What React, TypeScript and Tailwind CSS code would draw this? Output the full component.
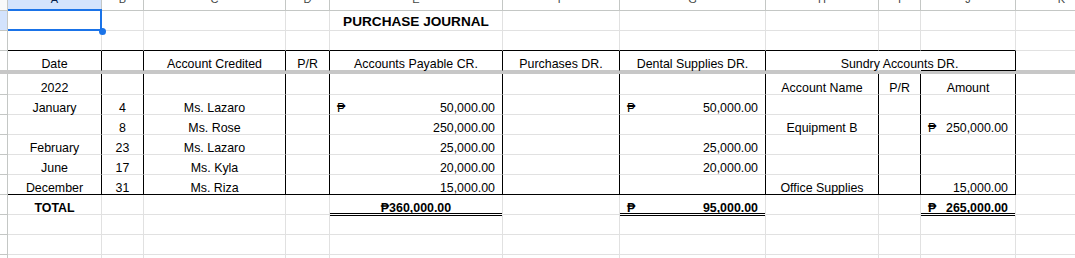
import type { ReactNode } from 'react';

type Cell = {
	t?: ReactNode;
	a?: 'c' | 'r' | 'cur';
	r?: 'k' | 'n';
	b?: 'k' | 'bar' | 'w';
	sh?: 'top' | 'bot';
	bold?: boolean;
	big?: boolean;
};

const COLS = [
	'w-[94px]',
	'w-[42px]',
	'w-[142px]',
	'w-[44px]',
	'w-[173px]',
	'w-[117px]',
	'w-[146px]',
	'w-[113px]',
	'w-[42px]',
	'w-[95px]',
	'w-[92px]',
];
const LETTERS = ['A', 'B', 'C', 'D', 'E', 'F', 'G', 'H', 'I', 'J', 'K'];

const RIGHT = { g: 'border-r-[#e1e1e1]', k: 'border-r-black', n: 'border-r-transparent' };
const BOTTOM = {
	g: 'border-b-[#e1e1e1]',
	k: 'border-b-black',
	bar: 'border-b-[#c7c7c7]',
	w: 'border-b-white',
};
const SHADOW = { top: 'shadow-[inset_0_1px_0_#000]', bot: 'shadow-[inset_0_-1px_0_#000]' };

// fill a full row of 11 cells from the few that hold something
function row(cells: Record<number, Cell>, base: Cell = {}, upto = 10): Cell[] {
	return COLS.map((_, i) => ({ ...(i < upto ? base : {}), ...cells[i] }));
}

const boxed: Cell = { r: 'k' };

const rows: { h: string; gutter?: string; cells: Cell[] }[] = [
	{
		h: 'h-[20px]',
		gutter: 'bg-[#d3e3fd]',
		cells: row({ 4: { t: 'PURCHASE JOURNAL', a: 'c', bold: true, big: true } }),
	},
	{ h: 'h-[20px]', cells: row({}, { b: 'k' }) },
	{
		h: 'h-[20px]',
		gutter: 'border-b-[#c7c7c7]',
		cells: row(
			{
				0: { t: 'Date', a: 'c' },
				2: { t: 'Account Credited', a: 'c' },
				3: { t: 'P/R', a: 'c' },
				4: { t: 'Accounts Payable CR.', a: 'c' },
				5: { t: 'Purchases DR.', a: 'c' },
				6: { t: 'Dental Supplies DR.', a: 'c' },
				7: { r: 'n' },
				8: { t: 'Sundry Accounts DR.', a: 'c', r: 'n' },
				9: { b: 'k' },
				10: { b: 'bar' },
			},
			{ r: 'k', b: 'bar' },
		),
	},
];

const body: { h: string; cells: Cell[] }[] = [
	{
		h: 'h-[21px]',
		cells: row(
			{
				0: { t: '2022', a: 'c' },
				7: { t: 'Account Name', a: 'c' },
				8: { t: 'P/R', a: 'c' },
				9: { t: 'Amount', a: 'c' },
			},
			boxed,
		),
	},
	{
		h: 'h-[20px]',
		cells: row(
			{
				0: { t: 'January', a: 'c' },
				1: { t: '4', a: 'c' },
				2: { t: 'Ms. Lazaro', a: 'c' },
				4: { t: '50,000.00', a: 'cur' },
				6: { t: '50,000.00', a: 'cur' },
			},
			boxed,
		),
	},
	{
		h: 'h-[20px]',
		cells: row(
			{
				1: { t: '8', a: 'c' },
				2: { t: 'Ms. Rose', a: 'c' },
				4: { t: '250,000.00', a: 'r' },
				7: { t: 'Equipment B', a: 'c' },
				9: { t: '250,000.00', a: 'cur' },
			},
			boxed,
		),
	},
	{
		h: 'h-[20px]',
		cells: row(
			{
				0: { t: 'February', a: 'c' },
				1: { t: '23', a: 'c' },
				2: { t: 'Ms. Lazaro', a: 'c' },
				4: { t: '25,000.00', a: 'r' },
				6: { t: '25,000.00', a: 'r' },
			},
			boxed,
		),
	},
	{
		h: 'h-[20px]',
		cells: row(
			{
				0: { t: 'June', a: 'c' },
				1: { t: '17', a: 'c' },
				2: { t: 'Ms. Kyla', a: 'c' },
				4: { t: '20,000.00', a: 'r' },
				6: { t: '20,000.00', a: 'r' },
			},
			boxed,
		),
	},
	{
		h: 'h-[20px]',
		cells: row(
			{
				0: { t: 'December', a: 'c' },
				1: { t: '31', a: 'c' },
				2: { t: 'Ms. Riza', a: 'c' },
				4: { t: '15,000.00', a: 'r' },
				7: { t: 'Office Supplies', a: 'c' },
				9: { t: '15,000.00', a: 'r' },
			},
			{ r: 'k', b: 'k' },
		),
	},
	{
		h: 'h-[20px]',
		cells: row({
			0: { t: 'TOTAL', a: 'c', bold: true },
			4: { t: '₱360,000.00', a: 'c', bold: true, b: 'w', sh: 'bot' },
			6: { t: '95,000.00', a: 'cur', bold: true, b: 'w', sh: 'bot' },
			9: { t: '265,000.00', a: 'cur', bold: true, b: 'w', sh: 'bot' },
		}),
	},
	{ h: 'h-[20px]', cells: row({ 4: { sh: 'top' }, 6: { sh: 'top' }, 9: { sh: 'top' } }) },
	{ h: 'h-[20px]', cells: row({}) },
	{ h: 'h-[20px]', cells: row({}) },
];

function GridCell({ c, w }: { c: Cell; w: string }) {
	const align =
		c.a === 'c'
			? 'justify-center'
			: c.a === 'r'
				? 'justify-end pr-[7px]'
				: c.a === 'cur'
					? 'justify-between px-[7px]'
					: 'justify-start pl-[3px]';
	return (
		<div
			className={`${w} flex shrink-0 items-end whitespace-nowrap border-r border-b leading-none ${align} ${
				RIGHT[c.r ?? 'g']
			} ${BOTTOM[c.b ?? 'g']} ${c.sh ? SHADOW[c.sh] : ''} ${c.bold ? 'font-bold' : ''} ${
				c.big ? 'pb-px text-[13.6px]' : 'pb-0'
			}`}
		>
			{c.a === 'cur' ? (
				<>
					<span>₱</span>
					<span>{c.t}</span>
				</>
			) : (
				c.t
			)}
		</div>
	);
}

function Row({ h, gutter, cells }: { h: string; gutter?: string; cells: Cell[] }) {
	return (
		<div className={`flex ${h}`}>
			<div className={`w-[8px] shrink-0 border-r border-b border-[#c4c7c5] ${gutter ?? ''}`} />
			{cells.map((c, i) => (
				<GridCell key={i} c={c} w={COLS[i]} />
			))}
		</div>
	);
}

export default function App() {
	return (
		<div className="relative h-[258px] w-[1075px] overflow-hidden bg-white font-['Liberation_Sans','DejaVu_Sans',Arial,sans-serif] text-[12.4px] text-black">
			{/* column letters, scrolled mostly out of view */}
			<div className="flex h-[11px]">
				<div className="w-[8px] shrink-0 border-r border-b border-[#c4c7c5] bg-[#f8f9fa]" />
				{LETTERS.map((l, i) => (
					<div
						key={l}
						className={`${COLS[i]} flex shrink-0 items-end justify-center overflow-hidden border-r border-b border-[#c4c7c5] pb-[5px] text-[11px] leading-none ${
							i === 0 ? 'bg-[#d3e3fd] text-[#041e49]' : 'bg-white text-[#444746]'
						}`}
					>
						{l}
					</div>
				))}
			</div>

			{rows.map((r, i) => (
				<Row key={i} {...r} />
			))}

			{/* frozen rows divider */}
			<div className="h-[3px] w-full bg-[#c7c7c7]" />

			{body.map((r, i) => (
				<Row key={i} {...r} />
			))}

			{/* selected cell A1 */}
			<div className="absolute top-[9px] left-[8px] h-[22px] w-[94px] border-t-2 border-r-2 border-b-2 border-[#1a73e8]" />
			<div className="absolute top-[28px] left-[99px] h-[7px] w-[7px] rounded-full bg-[#1a73e8]" />
		</div>
	);
}
